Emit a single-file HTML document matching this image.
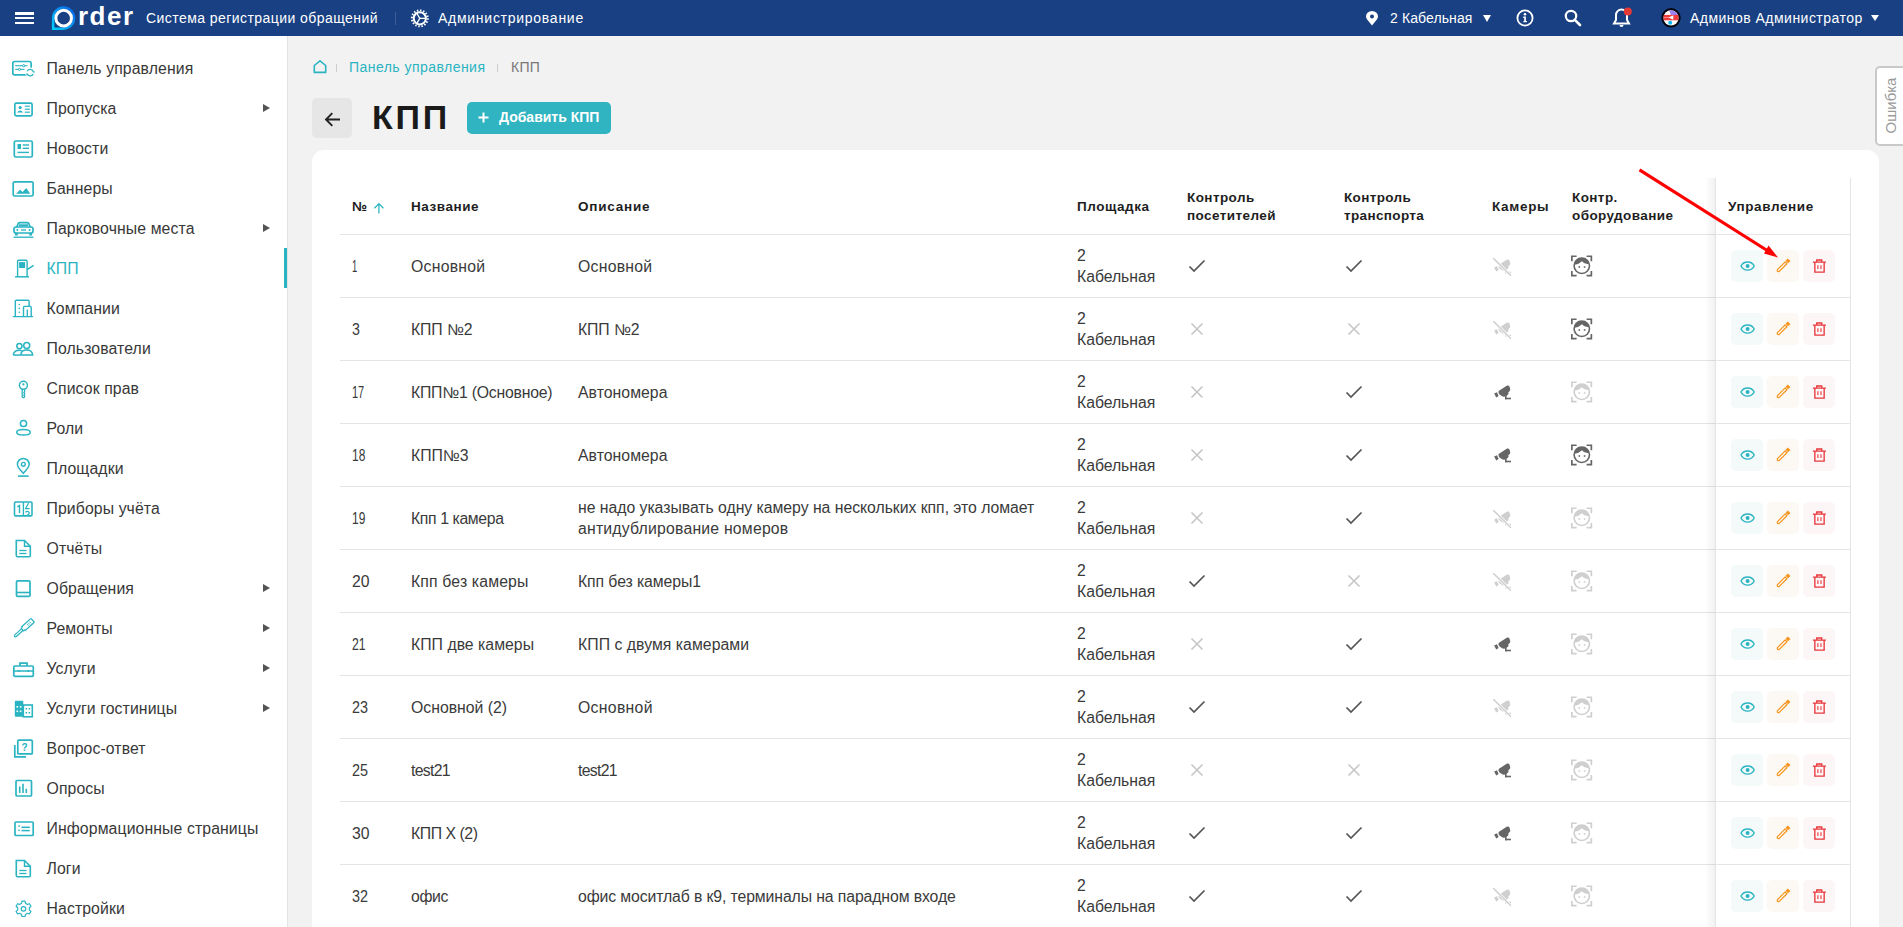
<!DOCTYPE html><html><head><meta charset="utf-8"><style>
*{box-sizing:border-box;margin:0;padding:0}
html,body{width:1903px;height:927px;overflow:hidden;background:#f2f2f2;font-family:"Liberation Sans", sans-serif;}
.a{position:absolute;white-space:nowrap}
#hdr{position:absolute;left:0;top:0;width:1903px;height:36px;background:#184082;}
.ht{position:absolute;color:#fff;font-size:14px;line-height:16px;white-space:nowrap}
#side{position:absolute;left:0;top:36px;width:288px;height:891px;background:#fff;border-right:1px solid #e3e3e3}
.si{position:absolute;left:46.5px;font-size:15.8px;letter-spacing:0.1px;color:#333;line-height:18px;white-space:nowrap}
.sic{position:absolute;left:11px;width:24px;height:24px}
.sar{position:absolute;left:263px;width:0;height:0;border-top:4.5px solid transparent;border-bottom:4.5px solid transparent;border-left:7px solid #555}
.th{position:absolute;font-size:13.5px;font-weight:700;color:#1e1e1e;line-height:18px;white-space:nowrap}
.td{position:absolute;font-size:15.8px;color:#3a3a3a;line-height:21px;white-space:nowrap;letter-spacing:0.12px}
.rl{position:absolute;left:340px;width:1510px;height:1px;background:#e4e4e4}
.btn{position:absolute;width:32px;height:32px;border-radius:5px}
</style></head><body><div id="hdr">
<div class="a" style="left:15px;top:12px;width:19px;height:2.5px;background:#fff"></div>
<div class="a" style="left:15px;top:16.75px;width:19px;height:2.5px;background:#fff"></div>
<div class="a" style="left:15px;top:21.5px;width:19px;height:2.5px;background:#fff"></div>
<svg class="a" style="left:45px;top:2px" width="32" height="32" viewBox="0 0 32 32">
<defs><linearGradient id="lg" x1="0" y1="1" x2="1" y2="0"><stop offset="0" stop-color="#00d4ff"/><stop offset="1" stop-color="#0a5ae6"/></linearGradient></defs>
<path d="M6.9 16 A11.75 11.75 0 1 1 18.65 27.75 L18.65 28 H6.9 Z" fill="url(#lg)"/>
<path d="M9.4 16.1 A9.25 9.25 0 1 1 18.65 25.35 L18.65 25.5 H9.4 Z" fill="#184082"/>
<circle cx="18.65" cy="16.15" r="7.8" fill="none" stroke="#fff" stroke-width="3"/>
</svg>
<div class="ht" style="left:78px;top:1px;font-size:26px;line-height:30px;letter-spacing:1.5px;font-weight:700">rder</div>
<div class="ht" style="left:146px;top:10px;letter-spacing:0.44px">Система регистрации обращений</div>
<div class="a" style="left:395px;top:12px;width:1px;height:13px;background:#3d5d95"></div>
<svg class="a" style="left:410px;top:9px" width="20" height="20" viewBox="0 0 20 20">
<circle cx="9.8" cy="9.35" r="8" fill="none" stroke="#fff" stroke-width="1.9" stroke-dasharray="1.45 1.69"/>
<circle cx="9.8" cy="9.35" r="6.1" fill="none" stroke="#fff" stroke-width="2"/>
<g stroke="#fff" stroke-width="1.3"><line x1="9.8" y1="9.35" x2="16" y2="9.35"/><line x1="9.8" y1="9.35" x2="6.7" y2="4"/><line x1="9.8" y1="9.35" x2="6.7" y2="14.7"/></g>
</svg>
<div class="ht" style="left:438px;top:10px;letter-spacing:0.73px">Администрирование</div>
<svg class="a" style="left:1365px;top:11px" width="14" height="15" viewBox="0 0 14 15">
<path d="M7 14.5 C3 9.5 1 7.5 1 5.5 A6 5.5 0 0 1 13 5.5 C13 7.5 11 9.5 7 14.5 Z" fill="#fff"/>
<circle cx="7" cy="5.5" r="2" fill="#184082"/>
</svg>
<div class="ht" style="left:1390px;top:10px;letter-spacing:0.1px">2 Кабельная</div>
<div class="a" style="left:1483px;top:15px;width:0;height:0;border-left:4.5px solid transparent;border-right:4.5px solid transparent;border-top:7px solid #fff"></div>
<svg class="a" style="left:1516px;top:9px" width="18" height="18" viewBox="0 0 18 18">
<circle cx="9" cy="9" r="7.6" fill="none" stroke="#fff" stroke-width="1.8"/>
<circle cx="9" cy="5.3" r="1.3" fill="#fff"/>
<path d="M7.3 7.6 H9.9 V12 H10.9 V13.3 H7.3 V12 H8.2 V8.9 H7.3 Z" fill="#fff"/>
</svg>
<svg class="a" style="left:1564px;top:9px" width="18" height="18" viewBox="0 0 18 18">
<circle cx="7" cy="7" r="5.2" fill="none" stroke="#fff" stroke-width="2.2"/>
<line x1="10.8" y1="10.8" x2="16" y2="16" stroke="#fff" stroke-width="2.6" stroke-linecap="round"/>
</svg>
<svg class="a" style="left:1612px;top:6px" width="22" height="22" viewBox="0 0 22 22">
<path d="M9.5 3.5 A5.5 5.5 0 0 1 15 9 V14 L17 17.5 H2 L4 14 V9 A5.5 5.5 0 0 1 9.5 3.5 Z" fill="none" stroke="#fff" stroke-width="2"/>
<path d="M7.5 19 A2 2 0 0 0 11.5 19 Z" fill="#fff"/>
<circle cx="15.8" cy="5.4" r="4" fill="#e53935"/>
</svg>
<svg class="a" style="left:1660px;top:7px" width="22" height="22" viewBox="0 0 22 22">
<circle cx="11" cy="10.8" r="9.7" fill="#050510"/>
<clipPath id="avc"><circle cx="11" cy="10.8" r="7.6"/></clipPath>
<g clip-path="url(#avc)">
<rect x="0" y="0" width="22" height="22" fill="#fff"/>
<path d="M9 3 Q15 2.5 18.5 8.5 L18.5 8.2 H11 Z" fill="#9c7ff0"/>
<rect x="2" y="7.9" width="18" height="5.4" fill="#f03c3c"/>
<path d="M8.5 10.5 L13.3 8.3 V12.7 Z" fill="#fff"/>
<line x1="4" y1="10.5" x2="9" y2="10.5" stroke="#ffb0b0" stroke-width="0.6"/>
<circle cx="10.2" cy="15.8" r="2" fill="#10b8f0"/>
</g>
</svg>
<div class="ht" style="left:1690px;top:10px;letter-spacing:0.47px">Админов Администратор</div>
<div class="a" style="left:1871px;top:15px;width:0;height:0;border-left:4px solid transparent;border-right:4px solid transparent;border-top:6px solid #fff"></div>
</div>
<div id="side">
<svg class="sic" style="top:20px" viewBox="0 0 24 24" width="24" height="24"><rect x="1.8" y="5.5" width="18.3" height="13.4" rx="1.8" fill="none" stroke="#2ab4c2" stroke-width="1.7"/><line x1="4.2" y1="9.7" x2="16.5" y2="9.7" stroke="#2ab4c2" stroke-width="1.1"/><circle cx="12.7" cy="9.7" r="1.1" fill="#fff" stroke="#2ab4c2" stroke-width="1"/><line x1="4.2" y1="13.4" x2="13.5" y2="13.4" stroke="#2ab4c2" stroke-width="1.1"/><circle cx="8.4" cy="13.4" r="1.1" fill="#fff" stroke="#2ab4c2" stroke-width="1"/><circle cx="19.2" cy="16.6" r="5" fill="#fff"/><path d="M16.2 15.2 A3.3 3.3 0 0 1 22.3 15.6 M22.2 18 A3.3 3.3 0 0 1 16.1 17.6" fill="none" stroke="#2ab4c2" stroke-width="1.3"/><path d="M21.3 15.6 L23.6 15.1 L23.2 17.3 Z M15 17.6 L17.2 17.9 L16.1 19.8 Z" fill="#2ab4c2"/></svg>
<div class="si" style="top:23.7px;color:#383838">Панель управления</div>
<svg class="sic" style="top:60px" viewBox="0 0 24 24" width="24" height="24"><rect x="3.8" y="7.2" width="17.3" height="12.6" rx="1.5" fill="none" stroke="#2ab4c2" stroke-width="1.7"/><circle cx="9.2" cy="11.6" r="1.6" fill="#2ab4c2"/><path d="M6.1 16.6 Q9.2 12.2 12.3 16.6 Z" fill="#2ab4c2"/><line x1="13.8" y1="10.2" x2="18.8" y2="10.2" stroke="#2ab4c2" stroke-width="1.2"/><line x1="13.8" y1="13.2" x2="18.8" y2="13.2" stroke="#2ab4c2" stroke-width="1.2"/><line x1="13.8" y1="16.2" x2="18.8" y2="16.2" stroke="#2ab4c2" stroke-width="1.2"/></svg>
<div class="si" style="top:63.7px;color:#383838">Пропуска</div>
<div class="sar" style="top:67.5px"></div>
<svg class="sic" style="top:100px" viewBox="0 0 24 24" width="24" height="24"><rect x="3.3" y="5" width="18" height="16" rx="1.5" fill="none" stroke="#2ab4c2" stroke-width="1.7"/><rect x="6.5" y="8" width="3.5" height="5" fill="#2ab4c2"/><line x1="11.8" y1="9" x2="18" y2="9" stroke="#2ab4c2" stroke-width="1.4"/><line x1="11.8" y1="12.3" x2="18" y2="12.3" stroke="#2ab4c2" stroke-width="1.4"/><line x1="6.5" y1="16.4" x2="18" y2="16.4" stroke="#2ab4c2" stroke-width="1.4"/></svg>
<div class="si" style="top:103.7px;color:#383838">Новости</div>
<svg class="sic" style="top:140px" viewBox="0 0 24 24" width="24" height="24"><rect x="2.2" y="5.8" width="19.9" height="14.2" rx="1.5" fill="none" stroke="#2ab4c2" stroke-width="1.7"/><path d="M5 17.8 L9 13.8 L11.6 16 L15.2 12 L19.3 17.8 Z" fill="#2ab4c2"/></svg>
<div class="si" style="top:143.7px;color:#383838">Баннеры</div>
<svg class="sic" style="top:180px" viewBox="0 0 24 24" width="24" height="24"><path d="M5.5 11.5 L7.3 7.5 Q7.8 6.6 8.9 6.6 H16.1 Q17.2 6.6 17.7 7.5 L19.5 11.5" fill="none" stroke="#2ab4c2" stroke-width="1.7"/><rect x="3" y="11" width="19" height="6" rx="2" fill="none" stroke="#2ab4c2" stroke-width="1.7"/><rect x="8" y="8.3" width="9" height="2" fill="#2ab4c2"/><circle cx="6.3" cy="14" r="1" fill="#2ab4c2"/><circle cx="18.7" cy="14" r="1" fill="#2ab4c2"/><line x1="10" y1="14" x2="15" y2="14" stroke="#2ab4c2" stroke-width="1.3"/><rect x="4" y="17" width="2.8" height="2.5" fill="#2ab4c2"/><rect x="18.2" y="17" width="2.8" height="2.5" fill="#2ab4c2"/><line x1="2.5" y1="21.2" x2="22.5" y2="21.2" stroke="#2ab4c2" stroke-width="1.3"/></svg>
<div class="si" style="top:183.7px;color:#383838">Парковочные места</div>
<div class="sar" style="top:187.5px"></div>
<svg class="sic" style="top:220px" viewBox="0 0 24 24" width="24" height="24"><path d="M6.6 20.6 V5.2 Q6.6 4.2 7.6 4.2 H15.1 Q16.1 4.2 16.1 5.2 V20.6" fill="none" stroke="#2ab4c2" stroke-width="1.4"/><rect x="8.1" y="6.1" width="6" height="5.9" fill="#2ab4c2"/><line x1="16.1" y1="13.6" x2="22.6" y2="9.3" stroke="#2ab4c2" stroke-width="1.4"/><line x1="4.1" y1="20.8" x2="18" y2="20.8" stroke="#2ab4c2" stroke-width="1.5"/></svg>
<div class="si" style="top:223.7px;color:#2ab4c2">КПП</div>
<svg class="sic" style="top:260px" viewBox="0 0 24 24" width="24" height="24"><path d="M4.3 20.5 V5.3 Q4.3 4.3 5.3 4.3 H17.1 Q18.1 4.3 18.1 5.3 V10.4" fill="none" stroke="#2ab4c2" stroke-width="1.4"/><path d="M12.5 20.5 V11.4 Q12.5 10.4 13.5 10.4 H19.2 Q20.2 10.4 20.2 11.4 V20.5" fill="none" stroke="#2ab4c2" stroke-width="1.4"/><line x1="16.3" y1="13.5" x2="16.3" y2="20.5" stroke="#2ab4c2" stroke-width="1.3"/><circle cx="8.3" cy="8.5" r="0.8" fill="#2ab4c2"/><circle cx="8.3" cy="12.4" r="0.8" fill="#2ab4c2"/><circle cx="8.3" cy="16.3" r="0.8" fill="#2ab4c2"/><line x1="2.4" y1="20.6" x2="21.5" y2="20.6" stroke="#2ab4c2" stroke-width="1.4" stroke-linecap="round"/></svg>
<div class="si" style="top:263.7px;color:#383838">Компании</div>
<svg class="sic" style="top:300px" viewBox="0 0 24 24" width="24" height="24"><g transform="translate(0,1.5)"><circle cx="8.4" cy="8.6" r="2.6" fill="none" stroke="#2ab4c2" stroke-width="1.5"/><circle cx="15.7" cy="8" r="3" fill="none" stroke="#2ab4c2" stroke-width="1.5"/><path d="M2.3 17.5 Q3 12.8 8.4 12.8 Q10 12.8 11 13.5" fill="none" stroke="#2ab4c2" stroke-width="1.5"/><path d="M9.7 17.6 Q10.2 12.6 15.7 12.6 Q21.2 12.6 21.7 17.6 Z" fill="none" stroke="#2ab4c2" stroke-width="1.5"/><line x1="2.3" y1="17.6" x2="9" y2="17.6" stroke="#2ab4c2" stroke-width="1.5"/></g></svg>
<div class="si" style="top:303.7px;color:#383838">Пользователи</div>
<svg class="sic" style="top:340px" viewBox="0 0 24 24" width="24" height="24"><circle cx="12.4" cy="9.3" r="4" fill="none" stroke="#2ab4c2" stroke-width="1.5"/><circle cx="12.4" cy="8.4" r="1.1" fill="#2ab4c2"/><path d="M11.2 13.2 V20.8 Q11.2 21.6 12 21.6 H12.8 Q13.6 21.6 13.6 20.8 V19.8 L12.9 19.1 L13.6 18.2 V17.3 L12.9 16.6 L13.6 15.8 V13.2" fill="none" stroke="#2ab4c2" stroke-width="1.3"/></svg>
<div class="si" style="top:343.7px;color:#383838">Список прав</div>
<svg class="sic" style="top:380px" viewBox="0 0 24 24" width="24" height="24"><circle cx="12.5" cy="7.5" r="3.1" fill="none" stroke="#2ab4c2" stroke-width="1.5"/><ellipse cx="12.5" cy="16.3" rx="6.8" ry="2.8" fill="none" stroke="#2ab4c2" stroke-width="1.5"/></svg>
<div class="si" style="top:383.7px;color:#383838">Роли</div>
<svg class="sic" style="top:420px" viewBox="0 0 24 24" width="24" height="24"><path d="M12.3 17.3 C8.6 13.5 6.4 11 6.4 8.3 A5.9 5.9 0 0 1 18.2 8.3 C18.2 11 16 13.5 12.3 17.3 Z" fill="none" stroke="#2ab4c2" stroke-width="1.5"/><circle cx="12.3" cy="8.3" r="1.9" fill="none" stroke="#2ab4c2" stroke-width="1.4"/><line x1="7" y1="20.1" x2="17.6" y2="20.1" stroke="#2ab4c2" stroke-width="1.6"/></svg>
<div class="si" style="top:423.7px;color:#383838">Площадки</div>
<svg class="sic" style="top:460px" viewBox="0 0 24 24" width="24" height="24"><rect x="3.5" y="6" width="17.5" height="13.9" rx="1.2" fill="none" stroke="#2ab4c2" stroke-width="1.6"/><line x1="12.4" y1="6" x2="12.4" y2="19.9" stroke="#2ab4c2" stroke-width="1.3"/><path d="M6.3 10.8 L8.5 9.5 V17" fill="none" stroke="#2ab4c2" stroke-width="1.4"/><path d="M17.6 7 L14.6 12.6 H18.6" fill="none" stroke="#2ab4c2" stroke-width="1.2"/><path d="M14.4 16.2 Q16.4 14.6 18.2 16.4 Q18.6 18.3 16.3 19" fill="none" stroke="#2ab4c2" stroke-width="1.2"/></svg>
<div class="si" style="top:463.7px;color:#383838">Приборы учёта</div>
<svg class="sic" style="top:500px" viewBox="0 0 24 24" width="24" height="24"><path d="M5.3 4.5 H13.5 L19.3 10.3 V19.5 Q19.3 20.8 18 20.8 H6.6 Q5.3 20.8 5.3 19.5 Z" fill="none" stroke="#2ab4c2" stroke-width="1.6"/><path d="M13.5 4.5 V10.3 H19.3" fill="none" stroke="#2ab4c2" stroke-width="1.4"/><line x1="8.3" y1="14.5" x2="15.5" y2="14.5" stroke="#2ab4c2" stroke-width="1.3"/><line x1="8.3" y1="17.5" x2="15.5" y2="17.5" stroke="#2ab4c2" stroke-width="1.3"/></svg>
<div class="si" style="top:503.7px;color:#383838">Отчёты</div>
<svg class="sic" style="top:540px" viewBox="0 0 24 24" width="24" height="24"><rect x="5.5" y="4.8" width="13.5" height="15.6" rx="1.2" fill="none" stroke="#2ab4c2" stroke-width="1.7"/><line x1="5.5" y1="16.5" x2="19" y2="16.5" stroke="#2ab4c2" stroke-width="1.6"/></svg>
<div class="si" style="top:543.7px;color:#383838">Обращения</div>
<div class="sar" style="top:547.5px"></div>
<svg class="sic" style="top:580px" viewBox="0 0 24 24" width="24" height="24"><g transform="translate(12.6,12.45) rotate(-42)" fill="none" stroke="#2ab4c2"><rect x="-12" y="-1.1" width="10.8" height="2.2" rx="1.1" stroke-width="1.2"/><path d="M-1.6 -1.9 H0 V-2.6 H11.4 Q12.2 -2.6 12.2 -1.8 V1.8 Q12.2 2.6 11.4 2.6 H0 V1.9 H-1.6 Z" stroke-width="1.3" fill="#fff"/><path d="M5.5 -1.3 V1.3 M7.2 -1.3 V1.3 M8.9 -1.3 V1.3" stroke-width="0.8"/></g></svg>
<div class="si" style="top:583.7px;color:#383838">Ремонты</div>
<div class="sar" style="top:587.5px"></div>
<svg class="sic" style="top:620px" viewBox="0 0 24 24" width="24" height="24"><rect x="2.8" y="10" width="19.5" height="10.3" rx="1" fill="none" stroke="#2ab4c2" stroke-width="1.7"/><path d="M9 10 V7.2 H16 V10" fill="none" stroke="#2ab4c2" stroke-width="1.7"/><line x1="2.8" y1="15" x2="22.3" y2="15" stroke="#2ab4c2" stroke-width="1.5"/><circle cx="7.8" cy="15" r="1" fill="#2ab4c2"/><circle cx="17.3" cy="15" r="1" fill="#2ab4c2"/></svg>
<div class="si" style="top:623.7px;color:#383838">Услуги</div>
<div class="sar" style="top:627.5px"></div>
<svg class="sic" style="top:660px" viewBox="0 0 24 24" width="24" height="24"><rect x="3.8" y="4.8" width="8.5" height="16" rx="1" fill="#2ab4c2"/><rect x="12.3" y="9" width="9" height="11.8" fill="none" stroke="#2ab4c2" stroke-width="1.6"/><rect x="5.5" y="10" width="1.6" height="1.6" fill="#fff"/><rect x="8.8" y="10" width="1.6" height="1.6" fill="#fff"/><rect x="5.5" y="14.5" width="1.6" height="1.6" fill="#fff"/><rect x="8.8" y="14.5" width="1.6" height="1.6" fill="#fff"/><rect x="14.6" y="12" width="1.5" height="1.5" fill="#2ab4c2"/><rect x="17.6" y="12" width="1.5" height="1.5" fill="#2ab4c2"/><rect x="14.6" y="16" width="1.5" height="1.5" fill="#2ab4c2"/><rect x="17.6" y="16" width="1.5" height="1.5" fill="#2ab4c2"/></svg>
<div class="si" style="top:663.7px;color:#383838">Услуги гостиницы</div>
<div class="sar" style="top:667.5px"></div>
<svg class="sic" style="top:700px" viewBox="0 0 24 24" width="24" height="24"><path d="M3.8 9 V20.8 H15" fill="none" stroke="#2ab4c2" stroke-width="1.7"/><rect x="6.8" y="4.2" width="14.5" height="13.7" rx="1" fill="none" stroke="#2ab4c2" stroke-width="1.7"/><text x="10.6" y="15" font-family="Liberation Sans" font-size="10" font-weight="700" fill="#2ab4c2">?</text></svg>
<div class="si" style="top:703.7px;color:#383838">Вопрос-ответ</div>
<svg class="sic" style="top:740px" viewBox="0 0 24 24" width="24" height="24"><rect x="5" y="4.5" width="15.5" height="15.5" rx="1" fill="none" stroke="#2ab4c2" stroke-width="1.7"/><line x1="8.7" y1="10.5" x2="8.7" y2="17" stroke="#2ab4c2" stroke-width="1.6"/><line x1="12" y1="7.8" x2="12" y2="17" stroke="#2ab4c2" stroke-width="1.6"/><line x1="15.3" y1="12.8" x2="15.3" y2="17" stroke="#2ab4c2" stroke-width="1.6"/></svg>
<div class="si" style="top:743.7px;color:#383838">Опросы</div>
<svg class="sic" style="top:780px" viewBox="0 0 24 24" width="24" height="24"><rect x="4" y="6" width="18.2" height="13.5" rx="1" fill="none" stroke="#2ab4c2" stroke-width="1.7"/><rect x="7.3" y="9.3" width="1.5" height="1.5" fill="#2ab4c2"/><rect x="7.3" y="13.6" width="1.5" height="1.5" fill="#2ab4c2"/><line x1="10.5" y1="11.3" x2="18.8" y2="11.3" stroke="#2ab4c2" stroke-width="1.5"/><line x1="10.5" y1="14.6" x2="18.8" y2="14.6" stroke="#2ab4c2" stroke-width="1.5"/></svg>
<div class="si" style="top:783.7px;color:#383838">Информационные страницы</div>
<svg class="sic" style="top:820px" viewBox="0 0 24 24" width="24" height="24"><path d="M5.3 4.5 H13.5 L19.3 10.3 V19.5 Q19.3 20.8 18 20.8 H6.6 Q5.3 20.8 5.3 19.5 Z" fill="none" stroke="#2ab4c2" stroke-width="1.6"/><path d="M13.5 4.5 V10.3 H19.3" fill="none" stroke="#2ab4c2" stroke-width="1.4"/><line x1="8.3" y1="14.5" x2="15.5" y2="14.5" stroke="#2ab4c2" stroke-width="1.3"/><line x1="8.3" y1="17.5" x2="15.5" y2="17.5" stroke="#2ab4c2" stroke-width="1.3"/></svg>
<div class="si" style="top:823.7px;color:#383838">Логи</div>
<svg class="sic" style="top:860px" viewBox="0 0 24 24" width="24" height="24"><path d="M11 5.2 H14 L14.5 7.3 L16.4 8.4 L18.4 7.7 L19.9 10.3 L18.3 11.8 V13.9 L19.9 15.4 L18.4 18 L16.4 17.3 L14.5 18.4 L14 20.5 H11 L10.5 18.4 L8.6 17.3 L6.6 18 L5.1 15.4 L6.7 13.9 V11.8 L5.1 10.3 L6.6 7.7 L8.6 8.4 L10.5 7.3 Z" fill="none" stroke="#2ab4c2" stroke-width="1.2" stroke-linejoin="round"/><circle cx="12.5" cy="12.85" r="2.3" fill="none" stroke="#2ab4c2" stroke-width="1.2"/></svg>
<div class="si" style="top:863.7px;color:#383838">Настройки</div>
<div class="a" style="left:284px;top:212px;width:3px;height:40px;background:#2ab4c2"></div>
</div>
<svg class="a" style="left:312px;top:59px" width="16" height="16" viewBox="0 0 16 16">
<path d="M2.3 13.4 V6.5 L8 1.8 L13.7 6.5 V13.4 Z" fill="none" stroke="#2ab4c2" stroke-width="1.6" stroke-linejoin="round"/>
</svg>
<div class="a" style="left:336px;top:64px;width:1px;height:8px;background:#ccc"></div>
<div class="a" style="left:349px;top:59px;font-size:14px;line-height:16px;color:#2ab4c2;letter-spacing:0.46px">Панель управления</div>
<div class="a" style="left:497px;top:64px;width:1px;height:8px;background:#ccc"></div>
<div class="a" style="left:511px;top:59px;font-size:14px;line-height:16px;color:#777;letter-spacing:0.3px">КПП</div>
<div class="a" style="left:312px;top:98px;width:40px;height:40px;border-radius:5px;background:#e6e6e6"></div>
<svg class="a" style="left:324px;top:111px" width="17" height="17" viewBox="0 0 17 17">
<path d="M16 8.5 H2 M8.3 2.2 L2 8.5 L8.3 14.8" fill="none" stroke="#222" stroke-width="1.9"/>
</svg>
<div class="a" style="left:372px;top:97px;font-size:34px;line-height:40px;font-weight:700;color:#1a1a1a;letter-spacing:2.8px">КПП</div>
<div class="a" style="left:467px;top:102px;width:144px;height:32px;border-radius:5px;background:#30b4c1"></div>
<svg class="a" style="left:478px;top:112px" width="11" height="11" viewBox="0 0 11 11">
<path d="M5.5 0.5 V10.5 M0.5 5.5 H10.5" stroke="#fff" stroke-width="2"/>
</svg>
<div class="a" style="left:499px;top:109px;font-size:14px;line-height:16px;font-weight:700;color:#fff">Добавить КПП</div>
<div class="a" style="left:1875px;top:66px;width:40px;height:80px;border:2px solid #c9c9c9;border-radius:5px;background:#fff"></div>
<div class="a" style="left:1862px;top:97px;width:57px;height:17px;transform:rotate(-90deg);font-size:15px;line-height:17px;color:#9a9a9a;text-align:center">Ошибка</div>
<div class="a" style="left:312px;top:150px;width:1567px;height:800px;border-radius:12px;background:#fff"></div>
<div class="th" style="left:352px;top:197.5px;letter-spacing:0.400px">№</div>
<svg class="a" style="left:373px;top:202px" width="12" height="12" viewBox="0 0 12 12">
<path d="M5.9 11.5 V1.6 M1.4 6.2 L5.9 1.6 L10.4 6.2" fill="none" stroke="#2ab4c2" stroke-width="1.25"/>
</svg>
<div class="th" style="left:411px;top:197.5px;letter-spacing:0.557px">Название</div>
<div class="th" style="left:578px;top:197.5px;letter-spacing:0.771px">Описание</div>
<div class="th" style="left:1077px;top:197.5px;letter-spacing:0.529px">Площадка</div>
<div class="th" style="left:1187px;top:189px;letter-spacing:0.420px">Контроль<br>посетителей</div>
<div class="th" style="left:1344px;top:189px;letter-spacing:0.356px">Контроль<br>транспорта</div>
<div class="th" style="left:1492px;top:197.5px;letter-spacing:0.680px">Камеры</div>
<div class="th" style="left:1572px;top:189px;letter-spacing:0.409px">Контр.<br>оборудование</div>
<div class="rl" style="top:234px"></div>
<div class="td" id="n0" style="left:352px;top:256px;letter-spacing:0;transform:scaleX(0.597);transform-origin:0 0">1</div>
<div class="td" id="m0" style="left:411px;top:256px;letter-spacing:0.243px">Основной</div>
<div class="td" id="d0" style="left:578px;top:256px;letter-spacing:0.243px">Основной</div>
<div class="td" id="k0" style="left:1077px;top:245px;letter-spacing:-0.05px">2<br>Кабельная</div>
<svg class="a" style="left:1188px;top:256.5px" width="18" height="18" viewBox="0 0 18 18"><path d="M1.5 9.5 L6 14 L16.5 3.5" fill="none" stroke="#555" stroke-width="1.7"/></svg>
<svg class="a" style="left:1345px;top:256.5px" width="18" height="18" viewBox="0 0 18 18"><path d="M1.5 9.5 L6 14 L16.5 3.5" fill="none" stroke="#555" stroke-width="1.7"/></svg>
<svg class="a" style="left:1493px;top:257.5px" width="19" height="19" viewBox="0 0 19 19"><path d="M5.6 6.9 L14.1 1.6 Q15.6 0.9 16.5 2.6 L17.2 5.1 Q17.5 6.3 16.5 7.3 L15.3 8.2 Q15.9 9.5 15.2 10.5 L12.8 12.3 Q10.5 13.4 8.4 11.7 L6.3 10.2 Q5.1 8.8 5.6 6.9 Z" fill="#cfcfcf"/><rect x="12" y="10.5" width="1.6" height="4.8" fill="#cfcfcf"/><rect x="12" y="13.7" width="6" height="1.6" fill="#cfcfcf"/><path d="M1.1 9.5 L4 8.2 L5.6 12 L3.3 13.6 Z" fill="#cfcfcf"/><line x1="0.2" y1="0.1" x2="17.9" y2="17.7" stroke="#fff" stroke-width="3"/><line x1="0.2" y1="0.1" x2="17.9" y2="17.7" stroke="#cfcfcf" stroke-width="1.5"/></svg>
<svg class="a" style="left:1570px;top:254.5px" width="24" height="24" viewBox="0 0 24 24">
<path d="M1.85 6.3 V1.25 H6.6 M16.6 1.25 H21.35 V6.3 M21.35 16.1 V20.65 H16.6 M6.6 20.65 H1.85 V16.1" fill="none" stroke="#666" stroke-width="1.7"/>
<circle cx="11.8" cy="10.8" r="7.7" fill="none" stroke="#666" stroke-width="1.6"/>
<path d="M4.3 9.8 A7.7 7.7 0 0 1 19.3 8.8 Q14.5 9.8 12 6.3 Q9 9.3 4.3 9.8 Z" fill="#666"/>
<rect x="8.5" y="11.2" width="1.6" height="1.6" fill="#666"/><rect x="13.8" y="11.2" width="1.6" height="1.6" fill="#666"/>
</svg>
<div class="rl" style="top:297px"></div>
<div class="td" id="n1" style="left:352px;top:319px;letter-spacing:0;transform:scaleX(0.898);transform-origin:0 0">3</div>
<div class="td" id="m1" style="left:411px;top:319px;letter-spacing:-0.100px">КПП №2</div>
<div class="td" id="d1" style="left:578px;top:319px;letter-spacing:-0.100px">КПП №2</div>
<div class="td" id="k1" style="left:1077px;top:308px;letter-spacing:-0.05px">2<br>Кабельная</div>
<svg class="a" style="left:1188px;top:319.5px" width="18" height="18" viewBox="0 0 18 18"><path d="M3.5 3.5 L14.5 14.5 M14.5 3.5 L3.5 14.5" fill="none" stroke="#c6c6c6" stroke-width="1.6"/></svg>
<svg class="a" style="left:1345px;top:319.5px" width="18" height="18" viewBox="0 0 18 18"><path d="M3.5 3.5 L14.5 14.5 M14.5 3.5 L3.5 14.5" fill="none" stroke="#c6c6c6" stroke-width="1.6"/></svg>
<svg class="a" style="left:1493px;top:320.5px" width="19" height="19" viewBox="0 0 19 19"><path d="M5.6 6.9 L14.1 1.6 Q15.6 0.9 16.5 2.6 L17.2 5.1 Q17.5 6.3 16.5 7.3 L15.3 8.2 Q15.9 9.5 15.2 10.5 L12.8 12.3 Q10.5 13.4 8.4 11.7 L6.3 10.2 Q5.1 8.8 5.6 6.9 Z" fill="#cfcfcf"/><rect x="12" y="10.5" width="1.6" height="4.8" fill="#cfcfcf"/><rect x="12" y="13.7" width="6" height="1.6" fill="#cfcfcf"/><path d="M1.1 9.5 L4 8.2 L5.6 12 L3.3 13.6 Z" fill="#cfcfcf"/><line x1="0.2" y1="0.1" x2="17.9" y2="17.7" stroke="#fff" stroke-width="3"/><line x1="0.2" y1="0.1" x2="17.9" y2="17.7" stroke="#cfcfcf" stroke-width="1.5"/></svg>
<svg class="a" style="left:1570px;top:317.5px" width="24" height="24" viewBox="0 0 24 24">
<path d="M1.85 6.3 V1.25 H6.6 M16.6 1.25 H21.35 V6.3 M21.35 16.1 V20.65 H16.6 M6.6 20.65 H1.85 V16.1" fill="none" stroke="#666" stroke-width="1.7"/>
<circle cx="11.8" cy="10.8" r="7.7" fill="none" stroke="#666" stroke-width="1.6"/>
<path d="M4.3 9.8 A7.7 7.7 0 0 1 19.3 8.8 Q14.5 9.8 12 6.3 Q9 9.3 4.3 9.8 Z" fill="#666"/>
<rect x="8.5" y="11.2" width="1.6" height="1.6" fill="#666"/><rect x="13.8" y="11.2" width="1.6" height="1.6" fill="#666"/>
</svg>
<div class="rl" style="top:360px"></div>
<div class="td" id="n2" style="left:352px;top:382px;letter-spacing:0;transform:scaleX(0.697);transform-origin:0 0">17</div>
<div class="td" id="m2" style="left:411px;top:382px;letter-spacing:-0.220px">КПП№1 (Основное)</div>
<div class="td" id="d2" style="left:578px;top:382px;letter-spacing:0.033px">Автономера</div>
<div class="td" id="k2" style="left:1077px;top:371px;letter-spacing:-0.05px">2<br>Кабельная</div>
<svg class="a" style="left:1188px;top:382.5px" width="18" height="18" viewBox="0 0 18 18"><path d="M3.5 3.5 L14.5 14.5 M14.5 3.5 L3.5 14.5" fill="none" stroke="#c6c6c6" stroke-width="1.6"/></svg>
<svg class="a" style="left:1345px;top:382.5px" width="18" height="18" viewBox="0 0 18 18"><path d="M1.5 9.5 L6 14 L16.5 3.5" fill="none" stroke="#555" stroke-width="1.7"/></svg>
<svg class="a" style="left:1493px;top:383.5px" width="19" height="19" viewBox="0 0 19 19"><path d="M5.6 6.9 L14.1 1.6 Q15.6 0.9 16.5 2.6 L17.2 5.1 Q17.5 6.3 16.5 7.3 L15.3 8.2 Q15.9 9.5 15.2 10.5 L12.8 12.3 Q10.5 13.4 8.4 11.7 L6.3 10.2 Q5.1 8.8 5.6 6.9 Z" fill="#666"/><rect x="12" y="10.5" width="1.6" height="4.8" fill="#666"/><rect x="12" y="13.7" width="6" height="1.6" fill="#666"/><path d="M1.1 9.5 L4 8.2 L5.6 12 L3.3 13.6 Z" fill="#666"/></svg>
<svg class="a" style="left:1570px;top:380.5px" width="24" height="24" viewBox="0 0 24 24">
<path d="M1.85 6.3 V1.25 H6.6 M16.6 1.25 H21.35 V6.3 M21.35 16.1 V20.65 H16.6 M6.6 20.65 H1.85 V16.1" fill="none" stroke="#cfcfcf" stroke-width="1.7"/>
<circle cx="11.8" cy="10.8" r="7.7" fill="none" stroke="#cfcfcf" stroke-width="1.6"/>
<path d="M4.3 9.8 A7.7 7.7 0 0 1 19.3 8.8 Q14.5 9.8 12 6.3 Q9 9.3 4.3 9.8 Z" fill="#cfcfcf"/>
<rect x="8.5" y="11.2" width="1.6" height="1.6" fill="#cfcfcf"/><rect x="13.8" y="11.2" width="1.6" height="1.6" fill="#cfcfcf"/>
</svg>
<div class="rl" style="top:423px"></div>
<div class="td" id="n3" style="left:352px;top:445px;letter-spacing:0;transform:scaleX(0.758);transform-origin:0 0">18</div>
<div class="td" id="m3" style="left:411px;top:445px;letter-spacing:-0.050px">КПП№3</div>
<div class="td" id="d3" style="left:578px;top:445px;letter-spacing:0.033px">Автономера</div>
<div class="td" id="k3" style="left:1077px;top:434px;letter-spacing:-0.05px">2<br>Кабельная</div>
<svg class="a" style="left:1188px;top:445.5px" width="18" height="18" viewBox="0 0 18 18"><path d="M3.5 3.5 L14.5 14.5 M14.5 3.5 L3.5 14.5" fill="none" stroke="#c6c6c6" stroke-width="1.6"/></svg>
<svg class="a" style="left:1345px;top:445.5px" width="18" height="18" viewBox="0 0 18 18"><path d="M1.5 9.5 L6 14 L16.5 3.5" fill="none" stroke="#555" stroke-width="1.7"/></svg>
<svg class="a" style="left:1493px;top:446.5px" width="19" height="19" viewBox="0 0 19 19"><path d="M5.6 6.9 L14.1 1.6 Q15.6 0.9 16.5 2.6 L17.2 5.1 Q17.5 6.3 16.5 7.3 L15.3 8.2 Q15.9 9.5 15.2 10.5 L12.8 12.3 Q10.5 13.4 8.4 11.7 L6.3 10.2 Q5.1 8.8 5.6 6.9 Z" fill="#666"/><rect x="12" y="10.5" width="1.6" height="4.8" fill="#666"/><rect x="12" y="13.7" width="6" height="1.6" fill="#666"/><path d="M1.1 9.5 L4 8.2 L5.6 12 L3.3 13.6 Z" fill="#666"/></svg>
<svg class="a" style="left:1570px;top:443.5px" width="24" height="24" viewBox="0 0 24 24">
<path d="M1.85 6.3 V1.25 H6.6 M16.6 1.25 H21.35 V6.3 M21.35 16.1 V20.65 H16.6 M6.6 20.65 H1.85 V16.1" fill="none" stroke="#666" stroke-width="1.7"/>
<circle cx="11.8" cy="10.8" r="7.7" fill="none" stroke="#666" stroke-width="1.6"/>
<path d="M4.3 9.8 A7.7 7.7 0 0 1 19.3 8.8 Q14.5 9.8 12 6.3 Q9 9.3 4.3 9.8 Z" fill="#666"/>
<rect x="8.5" y="11.2" width="1.6" height="1.6" fill="#666"/><rect x="13.8" y="11.2" width="1.6" height="1.6" fill="#666"/>
</svg>
<div class="rl" style="top:486px"></div>
<div class="td" id="n4" style="left:352px;top:508px;letter-spacing:0;transform:scaleX(0.758);transform-origin:0 0">19</div>
<div class="td" id="m4" style="left:411px;top:508px;letter-spacing:-0.382px">Кпп 1 камера</div>
<div class="td" id="d4" style="left:578px;top:497px;letter-spacing:-0.034px">не надо указывать одну камеру на нескольких кпп, это ломает</div>
<div class="td" id="e4" style="left:578px;top:518px;letter-spacing:0.200px">антидублирование номеров</div>
<div class="td" id="k4" style="left:1077px;top:497px;letter-spacing:-0.05px">2<br>Кабельная</div>
<svg class="a" style="left:1188px;top:508.5px" width="18" height="18" viewBox="0 0 18 18"><path d="M3.5 3.5 L14.5 14.5 M14.5 3.5 L3.5 14.5" fill="none" stroke="#c6c6c6" stroke-width="1.6"/></svg>
<svg class="a" style="left:1345px;top:508.5px" width="18" height="18" viewBox="0 0 18 18"><path d="M1.5 9.5 L6 14 L16.5 3.5" fill="none" stroke="#555" stroke-width="1.7"/></svg>
<svg class="a" style="left:1493px;top:509.5px" width="19" height="19" viewBox="0 0 19 19"><path d="M5.6 6.9 L14.1 1.6 Q15.6 0.9 16.5 2.6 L17.2 5.1 Q17.5 6.3 16.5 7.3 L15.3 8.2 Q15.9 9.5 15.2 10.5 L12.8 12.3 Q10.5 13.4 8.4 11.7 L6.3 10.2 Q5.1 8.8 5.6 6.9 Z" fill="#cfcfcf"/><rect x="12" y="10.5" width="1.6" height="4.8" fill="#cfcfcf"/><rect x="12" y="13.7" width="6" height="1.6" fill="#cfcfcf"/><path d="M1.1 9.5 L4 8.2 L5.6 12 L3.3 13.6 Z" fill="#cfcfcf"/><line x1="0.2" y1="0.1" x2="17.9" y2="17.7" stroke="#fff" stroke-width="3"/><line x1="0.2" y1="0.1" x2="17.9" y2="17.7" stroke="#cfcfcf" stroke-width="1.5"/></svg>
<svg class="a" style="left:1570px;top:506.5px" width="24" height="24" viewBox="0 0 24 24">
<path d="M1.85 6.3 V1.25 H6.6 M16.6 1.25 H21.35 V6.3 M21.35 16.1 V20.65 H16.6 M6.6 20.65 H1.85 V16.1" fill="none" stroke="#cfcfcf" stroke-width="1.7"/>
<circle cx="11.8" cy="10.8" r="7.7" fill="none" stroke="#cfcfcf" stroke-width="1.6"/>
<path d="M4.3 9.8 A7.7 7.7 0 0 1 19.3 8.8 Q14.5 9.8 12 6.3 Q9 9.3 4.3 9.8 Z" fill="#cfcfcf"/>
<rect x="8.5" y="11.2" width="1.6" height="1.6" fill="#cfcfcf"/><rect x="13.8" y="11.2" width="1.6" height="1.6" fill="#cfcfcf"/>
</svg>
<div class="rl" style="top:549px"></div>
<div class="td" id="n5" style="left:352px;top:571px;letter-spacing:0;transform:scaleX(1.000);transform-origin:0 0">20</div>
<div class="td" id="m5" style="left:411px;top:571px;letter-spacing:0.146px">Кпп без камеры</div>
<div class="td" id="d5" style="left:578px;top:571px;letter-spacing:-0.086px">Кпп без камеры1</div>
<div class="td" id="k5" style="left:1077px;top:560px;letter-spacing:-0.05px">2<br>Кабельная</div>
<svg class="a" style="left:1188px;top:571.5px" width="18" height="18" viewBox="0 0 18 18"><path d="M1.5 9.5 L6 14 L16.5 3.5" fill="none" stroke="#555" stroke-width="1.7"/></svg>
<svg class="a" style="left:1345px;top:571.5px" width="18" height="18" viewBox="0 0 18 18"><path d="M3.5 3.5 L14.5 14.5 M14.5 3.5 L3.5 14.5" fill="none" stroke="#c6c6c6" stroke-width="1.6"/></svg>
<svg class="a" style="left:1493px;top:572.5px" width="19" height="19" viewBox="0 0 19 19"><path d="M5.6 6.9 L14.1 1.6 Q15.6 0.9 16.5 2.6 L17.2 5.1 Q17.5 6.3 16.5 7.3 L15.3 8.2 Q15.9 9.5 15.2 10.5 L12.8 12.3 Q10.5 13.4 8.4 11.7 L6.3 10.2 Q5.1 8.8 5.6 6.9 Z" fill="#cfcfcf"/><rect x="12" y="10.5" width="1.6" height="4.8" fill="#cfcfcf"/><rect x="12" y="13.7" width="6" height="1.6" fill="#cfcfcf"/><path d="M1.1 9.5 L4 8.2 L5.6 12 L3.3 13.6 Z" fill="#cfcfcf"/><line x1="0.2" y1="0.1" x2="17.9" y2="17.7" stroke="#fff" stroke-width="3"/><line x1="0.2" y1="0.1" x2="17.9" y2="17.7" stroke="#cfcfcf" stroke-width="1.5"/></svg>
<svg class="a" style="left:1570px;top:569.5px" width="24" height="24" viewBox="0 0 24 24">
<path d="M1.85 6.3 V1.25 H6.6 M16.6 1.25 H21.35 V6.3 M21.35 16.1 V20.65 H16.6 M6.6 20.65 H1.85 V16.1" fill="none" stroke="#cfcfcf" stroke-width="1.7"/>
<circle cx="11.8" cy="10.8" r="7.7" fill="none" stroke="#cfcfcf" stroke-width="1.6"/>
<path d="M4.3 9.8 A7.7 7.7 0 0 1 19.3 8.8 Q14.5 9.8 12 6.3 Q9 9.3 4.3 9.8 Z" fill="#cfcfcf"/>
<rect x="8.5" y="11.2" width="1.6" height="1.6" fill="#cfcfcf"/><rect x="13.8" y="11.2" width="1.6" height="1.6" fill="#cfcfcf"/>
</svg>
<div class="rl" style="top:612px"></div>
<div class="td" id="n6" style="left:352px;top:634px;letter-spacing:0;transform:scaleX(0.771);transform-origin:0 0">21</div>
<div class="td" id="m6" style="left:411px;top:634px;letter-spacing:0.023px">КПП две камеры</div>
<div class="td" id="d6" style="left:578px;top:634px;letter-spacing:0.037px">КПП с двумя камерами</div>
<div class="td" id="k6" style="left:1077px;top:623px;letter-spacing:-0.05px">2<br>Кабельная</div>
<svg class="a" style="left:1188px;top:634.5px" width="18" height="18" viewBox="0 0 18 18"><path d="M3.5 3.5 L14.5 14.5 M14.5 3.5 L3.5 14.5" fill="none" stroke="#c6c6c6" stroke-width="1.6"/></svg>
<svg class="a" style="left:1345px;top:634.5px" width="18" height="18" viewBox="0 0 18 18"><path d="M1.5 9.5 L6 14 L16.5 3.5" fill="none" stroke="#555" stroke-width="1.7"/></svg>
<svg class="a" style="left:1493px;top:635.5px" width="19" height="19" viewBox="0 0 19 19"><path d="M5.6 6.9 L14.1 1.6 Q15.6 0.9 16.5 2.6 L17.2 5.1 Q17.5 6.3 16.5 7.3 L15.3 8.2 Q15.9 9.5 15.2 10.5 L12.8 12.3 Q10.5 13.4 8.4 11.7 L6.3 10.2 Q5.1 8.8 5.6 6.9 Z" fill="#666"/><rect x="12" y="10.5" width="1.6" height="4.8" fill="#666"/><rect x="12" y="13.7" width="6" height="1.6" fill="#666"/><path d="M1.1 9.5 L4 8.2 L5.6 12 L3.3 13.6 Z" fill="#666"/></svg>
<svg class="a" style="left:1570px;top:632.5px" width="24" height="24" viewBox="0 0 24 24">
<path d="M1.85 6.3 V1.25 H6.6 M16.6 1.25 H21.35 V6.3 M21.35 16.1 V20.65 H16.6 M6.6 20.65 H1.85 V16.1" fill="none" stroke="#cfcfcf" stroke-width="1.7"/>
<circle cx="11.8" cy="10.8" r="7.7" fill="none" stroke="#cfcfcf" stroke-width="1.6"/>
<path d="M4.3 9.8 A7.7 7.7 0 0 1 19.3 8.8 Q14.5 9.8 12 6.3 Q9 9.3 4.3 9.8 Z" fill="#cfcfcf"/>
<rect x="8.5" y="11.2" width="1.6" height="1.6" fill="#cfcfcf"/><rect x="13.8" y="11.2" width="1.6" height="1.6" fill="#cfcfcf"/>
</svg>
<div class="rl" style="top:675px"></div>
<div class="td" id="n7" style="left:352px;top:697px;letter-spacing:0;transform:scaleX(0.910);transform-origin:0 0">23</div>
<div class="td" id="m7" style="left:411px;top:697px;letter-spacing:-0.009px">Основной (2)</div>
<div class="td" id="d7" style="left:578px;top:697px;letter-spacing:0.300px">Основной</div>
<div class="td" id="k7" style="left:1077px;top:686px;letter-spacing:-0.05px">2<br>Кабельная</div>
<svg class="a" style="left:1188px;top:697.5px" width="18" height="18" viewBox="0 0 18 18"><path d="M1.5 9.5 L6 14 L16.5 3.5" fill="none" stroke="#555" stroke-width="1.7"/></svg>
<svg class="a" style="left:1345px;top:697.5px" width="18" height="18" viewBox="0 0 18 18"><path d="M1.5 9.5 L6 14 L16.5 3.5" fill="none" stroke="#555" stroke-width="1.7"/></svg>
<svg class="a" style="left:1493px;top:698.5px" width="19" height="19" viewBox="0 0 19 19"><path d="M5.6 6.9 L14.1 1.6 Q15.6 0.9 16.5 2.6 L17.2 5.1 Q17.5 6.3 16.5 7.3 L15.3 8.2 Q15.9 9.5 15.2 10.5 L12.8 12.3 Q10.5 13.4 8.4 11.7 L6.3 10.2 Q5.1 8.8 5.6 6.9 Z" fill="#cfcfcf"/><rect x="12" y="10.5" width="1.6" height="4.8" fill="#cfcfcf"/><rect x="12" y="13.7" width="6" height="1.6" fill="#cfcfcf"/><path d="M1.1 9.5 L4 8.2 L5.6 12 L3.3 13.6 Z" fill="#cfcfcf"/><line x1="0.2" y1="0.1" x2="17.9" y2="17.7" stroke="#fff" stroke-width="3"/><line x1="0.2" y1="0.1" x2="17.9" y2="17.7" stroke="#cfcfcf" stroke-width="1.5"/></svg>
<svg class="a" style="left:1570px;top:695.5px" width="24" height="24" viewBox="0 0 24 24">
<path d="M1.85 6.3 V1.25 H6.6 M16.6 1.25 H21.35 V6.3 M21.35 16.1 V20.65 H16.6 M6.6 20.65 H1.85 V16.1" fill="none" stroke="#cfcfcf" stroke-width="1.7"/>
<circle cx="11.8" cy="10.8" r="7.7" fill="none" stroke="#cfcfcf" stroke-width="1.6"/>
<path d="M4.3 9.8 A7.7 7.7 0 0 1 19.3 8.8 Q14.5 9.8 12 6.3 Q9 9.3 4.3 9.8 Z" fill="#cfcfcf"/>
<rect x="8.5" y="11.2" width="1.6" height="1.6" fill="#cfcfcf"/><rect x="13.8" y="11.2" width="1.6" height="1.6" fill="#cfcfcf"/>
</svg>
<div class="rl" style="top:738px"></div>
<div class="td" id="n8" style="left:352px;top:760px;letter-spacing:0;transform:scaleX(0.910);transform-origin:0 0">25</div>
<div class="td" id="m8" style="left:411px;top:760px;letter-spacing:-0.700px">test21</div>
<div class="td" id="d8" style="left:578px;top:760px;letter-spacing:-0.700px">test21</div>
<div class="td" id="k8" style="left:1077px;top:749px;letter-spacing:-0.05px">2<br>Кабельная</div>
<svg class="a" style="left:1188px;top:760.5px" width="18" height="18" viewBox="0 0 18 18"><path d="M3.5 3.5 L14.5 14.5 M14.5 3.5 L3.5 14.5" fill="none" stroke="#c6c6c6" stroke-width="1.6"/></svg>
<svg class="a" style="left:1345px;top:760.5px" width="18" height="18" viewBox="0 0 18 18"><path d="M3.5 3.5 L14.5 14.5 M14.5 3.5 L3.5 14.5" fill="none" stroke="#c6c6c6" stroke-width="1.6"/></svg>
<svg class="a" style="left:1493px;top:761.5px" width="19" height="19" viewBox="0 0 19 19"><path d="M5.6 6.9 L14.1 1.6 Q15.6 0.9 16.5 2.6 L17.2 5.1 Q17.5 6.3 16.5 7.3 L15.3 8.2 Q15.9 9.5 15.2 10.5 L12.8 12.3 Q10.5 13.4 8.4 11.7 L6.3 10.2 Q5.1 8.8 5.6 6.9 Z" fill="#666"/><rect x="12" y="10.5" width="1.6" height="4.8" fill="#666"/><rect x="12" y="13.7" width="6" height="1.6" fill="#666"/><path d="M1.1 9.5 L4 8.2 L5.6 12 L3.3 13.6 Z" fill="#666"/></svg>
<svg class="a" style="left:1570px;top:758.5px" width="24" height="24" viewBox="0 0 24 24">
<path d="M1.85 6.3 V1.25 H6.6 M16.6 1.25 H21.35 V6.3 M21.35 16.1 V20.65 H16.6 M6.6 20.65 H1.85 V16.1" fill="none" stroke="#cfcfcf" stroke-width="1.7"/>
<circle cx="11.8" cy="10.8" r="7.7" fill="none" stroke="#cfcfcf" stroke-width="1.6"/>
<path d="M4.3 9.8 A7.7 7.7 0 0 1 19.3 8.8 Q14.5 9.8 12 6.3 Q9 9.3 4.3 9.8 Z" fill="#cfcfcf"/>
<rect x="8.5" y="11.2" width="1.6" height="1.6" fill="#cfcfcf"/><rect x="13.8" y="11.2" width="1.6" height="1.6" fill="#cfcfcf"/>
</svg>
<div class="rl" style="top:801px"></div>
<div class="td" id="n9" style="left:352px;top:823px;letter-spacing:0;transform:scaleX(1.000);transform-origin:0 0">30</div>
<div class="td" id="m9" style="left:411px;top:823px;letter-spacing:-0.450px">КПП X (2)</div>
<div class="td" id="k9" style="left:1077px;top:812px;letter-spacing:-0.05px">2<br>Кабельная</div>
<svg class="a" style="left:1188px;top:823.5px" width="18" height="18" viewBox="0 0 18 18"><path d="M1.5 9.5 L6 14 L16.5 3.5" fill="none" stroke="#555" stroke-width="1.7"/></svg>
<svg class="a" style="left:1345px;top:823.5px" width="18" height="18" viewBox="0 0 18 18"><path d="M1.5 9.5 L6 14 L16.5 3.5" fill="none" stroke="#555" stroke-width="1.7"/></svg>
<svg class="a" style="left:1493px;top:824.5px" width="19" height="19" viewBox="0 0 19 19"><path d="M5.6 6.9 L14.1 1.6 Q15.6 0.9 16.5 2.6 L17.2 5.1 Q17.5 6.3 16.5 7.3 L15.3 8.2 Q15.9 9.5 15.2 10.5 L12.8 12.3 Q10.5 13.4 8.4 11.7 L6.3 10.2 Q5.1 8.8 5.6 6.9 Z" fill="#666"/><rect x="12" y="10.5" width="1.6" height="4.8" fill="#666"/><rect x="12" y="13.7" width="6" height="1.6" fill="#666"/><path d="M1.1 9.5 L4 8.2 L5.6 12 L3.3 13.6 Z" fill="#666"/></svg>
<svg class="a" style="left:1570px;top:821.5px" width="24" height="24" viewBox="0 0 24 24">
<path d="M1.85 6.3 V1.25 H6.6 M16.6 1.25 H21.35 V6.3 M21.35 16.1 V20.65 H16.6 M6.6 20.65 H1.85 V16.1" fill="none" stroke="#cfcfcf" stroke-width="1.7"/>
<circle cx="11.8" cy="10.8" r="7.7" fill="none" stroke="#cfcfcf" stroke-width="1.6"/>
<path d="M4.3 9.8 A7.7 7.7 0 0 1 19.3 8.8 Q14.5 9.8 12 6.3 Q9 9.3 4.3 9.8 Z" fill="#cfcfcf"/>
<rect x="8.5" y="11.2" width="1.6" height="1.6" fill="#cfcfcf"/><rect x="13.8" y="11.2" width="1.6" height="1.6" fill="#cfcfcf"/>
</svg>
<div class="rl" style="top:864px"></div>
<div class="td" id="n10" style="left:352px;top:886px;letter-spacing:0;transform:scaleX(0.910);transform-origin:0 0">32</div>
<div class="td" id="m10" style="left:411px;top:886px;letter-spacing:-0.367px">офис</div>
<div class="td" id="d10" style="left:578px;top:886px;letter-spacing:-0.113px">офис моситлаб в к9, терминалы на парадном входе</div>
<div class="td" id="k10" style="left:1077px;top:875px;letter-spacing:-0.05px">2<br>Кабельная</div>
<svg class="a" style="left:1188px;top:886.5px" width="18" height="18" viewBox="0 0 18 18"><path d="M1.5 9.5 L6 14 L16.5 3.5" fill="none" stroke="#555" stroke-width="1.7"/></svg>
<svg class="a" style="left:1345px;top:886.5px" width="18" height="18" viewBox="0 0 18 18"><path d="M1.5 9.5 L6 14 L16.5 3.5" fill="none" stroke="#555" stroke-width="1.7"/></svg>
<svg class="a" style="left:1493px;top:887.5px" width="19" height="19" viewBox="0 0 19 19"><path d="M5.6 6.9 L14.1 1.6 Q15.6 0.9 16.5 2.6 L17.2 5.1 Q17.5 6.3 16.5 7.3 L15.3 8.2 Q15.9 9.5 15.2 10.5 L12.8 12.3 Q10.5 13.4 8.4 11.7 L6.3 10.2 Q5.1 8.8 5.6 6.9 Z" fill="#cfcfcf"/><rect x="12" y="10.5" width="1.6" height="4.8" fill="#cfcfcf"/><rect x="12" y="13.7" width="6" height="1.6" fill="#cfcfcf"/><path d="M1.1 9.5 L4 8.2 L5.6 12 L3.3 13.6 Z" fill="#cfcfcf"/><line x1="0.2" y1="0.1" x2="17.9" y2="17.7" stroke="#fff" stroke-width="3"/><line x1="0.2" y1="0.1" x2="17.9" y2="17.7" stroke="#cfcfcf" stroke-width="1.5"/></svg>
<svg class="a" style="left:1570px;top:884.5px" width="24" height="24" viewBox="0 0 24 24">
<path d="M1.85 6.3 V1.25 H6.6 M16.6 1.25 H21.35 V6.3 M21.35 16.1 V20.65 H16.6 M6.6 20.65 H1.85 V16.1" fill="none" stroke="#cfcfcf" stroke-width="1.7"/>
<circle cx="11.8" cy="10.8" r="7.7" fill="none" stroke="#cfcfcf" stroke-width="1.6"/>
<path d="M4.3 9.8 A7.7 7.7 0 0 1 19.3 8.8 Q14.5 9.8 12 6.3 Q9 9.3 4.3 9.8 Z" fill="#cfcfcf"/>
<rect x="8.5" y="11.2" width="1.6" height="1.6" fill="#cfcfcf"/><rect x="13.8" y="11.2" width="1.6" height="1.6" fill="#cfcfcf"/>
</svg>
<div class="rl" style="top:927px"></div>
<div class="a" style="left:1705px;top:178px;width:10px;height:760px;background:linear-gradient(to right, rgba(0,0,0,0), rgba(0,0,0,0.055))"></div>
<div class="a" style="left:1715px;top:178px;width:136px;height:760px;background:#fff;border-left:1px solid #e4e4e4;border-right:1px solid #e4e4e4"></div>
<div class="th" style="left:1728px;top:197.5px;letter-spacing:0.600px">Управление</div>
<div class="a" style="left:1715px;top:234px;width:136px;height:1px;background:#e4e4e4"></div>
<div class="a" style="left:1715px;top:297px;width:136px;height:1px;background:#e4e4e4"></div>
<div class="btn" style="left:1731px;top:250px;background:#f4f9fa"></div>
<div class="btn" style="left:1767px;top:250px;background:#fcf8f3"></div>
<div class="btn" style="left:1803px;top:250px;background:#fdf6f6"></div>
<svg class="a" style="left:1731px;top:250px" width="32" height="32" viewBox="0 0 32 32">
<path d="M10 16 C12.6 10.6, 20.6 10.6, 23.2 16 C20.6 21.4, 12.6 21.4, 10 16 Z" fill="none" stroke="#2ab4c2" stroke-width="1.35"/>
<circle cx="16.6" cy="16" r="2" fill="#2ab4c2"/></svg>
<svg class="a" style="left:1767px;top:250px" width="32" height="32" viewBox="0 0 32 32">
<g transform="translate(16.1,15.8) rotate(-45)"><path d="M-8 0 L-7 -1.25 H4.2 V1.25 H-7 Z" fill="none" stroke="#f7941d" stroke-width="1.2" stroke-linejoin="round"/>
<rect x="5.3" y="-1.85" width="3.2" height="3.7" fill="#f7941d"/></g></svg>
<svg class="a" style="left:1803px;top:250px" width="32" height="32" viewBox="0 0 32 32">
<path d="M9.9 12.1 H22.9 M11.85 12.1 V22.05 H21.15 V12.1 M13.75 12.1 V9.95 H18.75 V12.1" fill="none" stroke="#e8383d" stroke-width="1.35"/>
<line x1="14.9" y1="15.3" x2="14.9" y2="19" stroke="#e8383d" stroke-width="1.1"/><line x1="18" y1="15.3" x2="18" y2="19" stroke="#e8383d" stroke-width="1.1"/></svg>
<div class="a" style="left:1715px;top:360px;width:136px;height:1px;background:#e4e4e4"></div>
<div class="btn" style="left:1731px;top:313px;background:#f4f9fa"></div>
<div class="btn" style="left:1767px;top:313px;background:#fcf8f3"></div>
<div class="btn" style="left:1803px;top:313px;background:#fdf6f6"></div>
<svg class="a" style="left:1731px;top:313px" width="32" height="32" viewBox="0 0 32 32">
<path d="M10 16 C12.6 10.6, 20.6 10.6, 23.2 16 C20.6 21.4, 12.6 21.4, 10 16 Z" fill="none" stroke="#2ab4c2" stroke-width="1.35"/>
<circle cx="16.6" cy="16" r="2" fill="#2ab4c2"/></svg>
<svg class="a" style="left:1767px;top:313px" width="32" height="32" viewBox="0 0 32 32">
<g transform="translate(16.1,15.8) rotate(-45)"><path d="M-8 0 L-7 -1.25 H4.2 V1.25 H-7 Z" fill="none" stroke="#f7941d" stroke-width="1.2" stroke-linejoin="round"/>
<rect x="5.3" y="-1.85" width="3.2" height="3.7" fill="#f7941d"/></g></svg>
<svg class="a" style="left:1803px;top:313px" width="32" height="32" viewBox="0 0 32 32">
<path d="M9.9 12.1 H22.9 M11.85 12.1 V22.05 H21.15 V12.1 M13.75 12.1 V9.95 H18.75 V12.1" fill="none" stroke="#e8383d" stroke-width="1.35"/>
<line x1="14.9" y1="15.3" x2="14.9" y2="19" stroke="#e8383d" stroke-width="1.1"/><line x1="18" y1="15.3" x2="18" y2="19" stroke="#e8383d" stroke-width="1.1"/></svg>
<div class="a" style="left:1715px;top:423px;width:136px;height:1px;background:#e4e4e4"></div>
<div class="btn" style="left:1731px;top:376px;background:#f4f9fa"></div>
<div class="btn" style="left:1767px;top:376px;background:#fcf8f3"></div>
<div class="btn" style="left:1803px;top:376px;background:#fdf6f6"></div>
<svg class="a" style="left:1731px;top:376px" width="32" height="32" viewBox="0 0 32 32">
<path d="M10 16 C12.6 10.6, 20.6 10.6, 23.2 16 C20.6 21.4, 12.6 21.4, 10 16 Z" fill="none" stroke="#2ab4c2" stroke-width="1.35"/>
<circle cx="16.6" cy="16" r="2" fill="#2ab4c2"/></svg>
<svg class="a" style="left:1767px;top:376px" width="32" height="32" viewBox="0 0 32 32">
<g transform="translate(16.1,15.8) rotate(-45)"><path d="M-8 0 L-7 -1.25 H4.2 V1.25 H-7 Z" fill="none" stroke="#f7941d" stroke-width="1.2" stroke-linejoin="round"/>
<rect x="5.3" y="-1.85" width="3.2" height="3.7" fill="#f7941d"/></g></svg>
<svg class="a" style="left:1803px;top:376px" width="32" height="32" viewBox="0 0 32 32">
<path d="M9.9 12.1 H22.9 M11.85 12.1 V22.05 H21.15 V12.1 M13.75 12.1 V9.95 H18.75 V12.1" fill="none" stroke="#e8383d" stroke-width="1.35"/>
<line x1="14.9" y1="15.3" x2="14.9" y2="19" stroke="#e8383d" stroke-width="1.1"/><line x1="18" y1="15.3" x2="18" y2="19" stroke="#e8383d" stroke-width="1.1"/></svg>
<div class="a" style="left:1715px;top:486px;width:136px;height:1px;background:#e4e4e4"></div>
<div class="btn" style="left:1731px;top:439px;background:#f4f9fa"></div>
<div class="btn" style="left:1767px;top:439px;background:#fcf8f3"></div>
<div class="btn" style="left:1803px;top:439px;background:#fdf6f6"></div>
<svg class="a" style="left:1731px;top:439px" width="32" height="32" viewBox="0 0 32 32">
<path d="M10 16 C12.6 10.6, 20.6 10.6, 23.2 16 C20.6 21.4, 12.6 21.4, 10 16 Z" fill="none" stroke="#2ab4c2" stroke-width="1.35"/>
<circle cx="16.6" cy="16" r="2" fill="#2ab4c2"/></svg>
<svg class="a" style="left:1767px;top:439px" width="32" height="32" viewBox="0 0 32 32">
<g transform="translate(16.1,15.8) rotate(-45)"><path d="M-8 0 L-7 -1.25 H4.2 V1.25 H-7 Z" fill="none" stroke="#f7941d" stroke-width="1.2" stroke-linejoin="round"/>
<rect x="5.3" y="-1.85" width="3.2" height="3.7" fill="#f7941d"/></g></svg>
<svg class="a" style="left:1803px;top:439px" width="32" height="32" viewBox="0 0 32 32">
<path d="M9.9 12.1 H22.9 M11.85 12.1 V22.05 H21.15 V12.1 M13.75 12.1 V9.95 H18.75 V12.1" fill="none" stroke="#e8383d" stroke-width="1.35"/>
<line x1="14.9" y1="15.3" x2="14.9" y2="19" stroke="#e8383d" stroke-width="1.1"/><line x1="18" y1="15.3" x2="18" y2="19" stroke="#e8383d" stroke-width="1.1"/></svg>
<div class="a" style="left:1715px;top:549px;width:136px;height:1px;background:#e4e4e4"></div>
<div class="btn" style="left:1731px;top:502px;background:#f4f9fa"></div>
<div class="btn" style="left:1767px;top:502px;background:#fcf8f3"></div>
<div class="btn" style="left:1803px;top:502px;background:#fdf6f6"></div>
<svg class="a" style="left:1731px;top:502px" width="32" height="32" viewBox="0 0 32 32">
<path d="M10 16 C12.6 10.6, 20.6 10.6, 23.2 16 C20.6 21.4, 12.6 21.4, 10 16 Z" fill="none" stroke="#2ab4c2" stroke-width="1.35"/>
<circle cx="16.6" cy="16" r="2" fill="#2ab4c2"/></svg>
<svg class="a" style="left:1767px;top:502px" width="32" height="32" viewBox="0 0 32 32">
<g transform="translate(16.1,15.8) rotate(-45)"><path d="M-8 0 L-7 -1.25 H4.2 V1.25 H-7 Z" fill="none" stroke="#f7941d" stroke-width="1.2" stroke-linejoin="round"/>
<rect x="5.3" y="-1.85" width="3.2" height="3.7" fill="#f7941d"/></g></svg>
<svg class="a" style="left:1803px;top:502px" width="32" height="32" viewBox="0 0 32 32">
<path d="M9.9 12.1 H22.9 M11.85 12.1 V22.05 H21.15 V12.1 M13.75 12.1 V9.95 H18.75 V12.1" fill="none" stroke="#e8383d" stroke-width="1.35"/>
<line x1="14.9" y1="15.3" x2="14.9" y2="19" stroke="#e8383d" stroke-width="1.1"/><line x1="18" y1="15.3" x2="18" y2="19" stroke="#e8383d" stroke-width="1.1"/></svg>
<div class="a" style="left:1715px;top:612px;width:136px;height:1px;background:#e4e4e4"></div>
<div class="btn" style="left:1731px;top:565px;background:#f4f9fa"></div>
<div class="btn" style="left:1767px;top:565px;background:#fcf8f3"></div>
<div class="btn" style="left:1803px;top:565px;background:#fdf6f6"></div>
<svg class="a" style="left:1731px;top:565px" width="32" height="32" viewBox="0 0 32 32">
<path d="M10 16 C12.6 10.6, 20.6 10.6, 23.2 16 C20.6 21.4, 12.6 21.4, 10 16 Z" fill="none" stroke="#2ab4c2" stroke-width="1.35"/>
<circle cx="16.6" cy="16" r="2" fill="#2ab4c2"/></svg>
<svg class="a" style="left:1767px;top:565px" width="32" height="32" viewBox="0 0 32 32">
<g transform="translate(16.1,15.8) rotate(-45)"><path d="M-8 0 L-7 -1.25 H4.2 V1.25 H-7 Z" fill="none" stroke="#f7941d" stroke-width="1.2" stroke-linejoin="round"/>
<rect x="5.3" y="-1.85" width="3.2" height="3.7" fill="#f7941d"/></g></svg>
<svg class="a" style="left:1803px;top:565px" width="32" height="32" viewBox="0 0 32 32">
<path d="M9.9 12.1 H22.9 M11.85 12.1 V22.05 H21.15 V12.1 M13.75 12.1 V9.95 H18.75 V12.1" fill="none" stroke="#e8383d" stroke-width="1.35"/>
<line x1="14.9" y1="15.3" x2="14.9" y2="19" stroke="#e8383d" stroke-width="1.1"/><line x1="18" y1="15.3" x2="18" y2="19" stroke="#e8383d" stroke-width="1.1"/></svg>
<div class="a" style="left:1715px;top:675px;width:136px;height:1px;background:#e4e4e4"></div>
<div class="btn" style="left:1731px;top:628px;background:#f4f9fa"></div>
<div class="btn" style="left:1767px;top:628px;background:#fcf8f3"></div>
<div class="btn" style="left:1803px;top:628px;background:#fdf6f6"></div>
<svg class="a" style="left:1731px;top:628px" width="32" height="32" viewBox="0 0 32 32">
<path d="M10 16 C12.6 10.6, 20.6 10.6, 23.2 16 C20.6 21.4, 12.6 21.4, 10 16 Z" fill="none" stroke="#2ab4c2" stroke-width="1.35"/>
<circle cx="16.6" cy="16" r="2" fill="#2ab4c2"/></svg>
<svg class="a" style="left:1767px;top:628px" width="32" height="32" viewBox="0 0 32 32">
<g transform="translate(16.1,15.8) rotate(-45)"><path d="M-8 0 L-7 -1.25 H4.2 V1.25 H-7 Z" fill="none" stroke="#f7941d" stroke-width="1.2" stroke-linejoin="round"/>
<rect x="5.3" y="-1.85" width="3.2" height="3.7" fill="#f7941d"/></g></svg>
<svg class="a" style="left:1803px;top:628px" width="32" height="32" viewBox="0 0 32 32">
<path d="M9.9 12.1 H22.9 M11.85 12.1 V22.05 H21.15 V12.1 M13.75 12.1 V9.95 H18.75 V12.1" fill="none" stroke="#e8383d" stroke-width="1.35"/>
<line x1="14.9" y1="15.3" x2="14.9" y2="19" stroke="#e8383d" stroke-width="1.1"/><line x1="18" y1="15.3" x2="18" y2="19" stroke="#e8383d" stroke-width="1.1"/></svg>
<div class="a" style="left:1715px;top:738px;width:136px;height:1px;background:#e4e4e4"></div>
<div class="btn" style="left:1731px;top:691px;background:#f4f9fa"></div>
<div class="btn" style="left:1767px;top:691px;background:#fcf8f3"></div>
<div class="btn" style="left:1803px;top:691px;background:#fdf6f6"></div>
<svg class="a" style="left:1731px;top:691px" width="32" height="32" viewBox="0 0 32 32">
<path d="M10 16 C12.6 10.6, 20.6 10.6, 23.2 16 C20.6 21.4, 12.6 21.4, 10 16 Z" fill="none" stroke="#2ab4c2" stroke-width="1.35"/>
<circle cx="16.6" cy="16" r="2" fill="#2ab4c2"/></svg>
<svg class="a" style="left:1767px;top:691px" width="32" height="32" viewBox="0 0 32 32">
<g transform="translate(16.1,15.8) rotate(-45)"><path d="M-8 0 L-7 -1.25 H4.2 V1.25 H-7 Z" fill="none" stroke="#f7941d" stroke-width="1.2" stroke-linejoin="round"/>
<rect x="5.3" y="-1.85" width="3.2" height="3.7" fill="#f7941d"/></g></svg>
<svg class="a" style="left:1803px;top:691px" width="32" height="32" viewBox="0 0 32 32">
<path d="M9.9 12.1 H22.9 M11.85 12.1 V22.05 H21.15 V12.1 M13.75 12.1 V9.95 H18.75 V12.1" fill="none" stroke="#e8383d" stroke-width="1.35"/>
<line x1="14.9" y1="15.3" x2="14.9" y2="19" stroke="#e8383d" stroke-width="1.1"/><line x1="18" y1="15.3" x2="18" y2="19" stroke="#e8383d" stroke-width="1.1"/></svg>
<div class="a" style="left:1715px;top:801px;width:136px;height:1px;background:#e4e4e4"></div>
<div class="btn" style="left:1731px;top:754px;background:#f4f9fa"></div>
<div class="btn" style="left:1767px;top:754px;background:#fcf8f3"></div>
<div class="btn" style="left:1803px;top:754px;background:#fdf6f6"></div>
<svg class="a" style="left:1731px;top:754px" width="32" height="32" viewBox="0 0 32 32">
<path d="M10 16 C12.6 10.6, 20.6 10.6, 23.2 16 C20.6 21.4, 12.6 21.4, 10 16 Z" fill="none" stroke="#2ab4c2" stroke-width="1.35"/>
<circle cx="16.6" cy="16" r="2" fill="#2ab4c2"/></svg>
<svg class="a" style="left:1767px;top:754px" width="32" height="32" viewBox="0 0 32 32">
<g transform="translate(16.1,15.8) rotate(-45)"><path d="M-8 0 L-7 -1.25 H4.2 V1.25 H-7 Z" fill="none" stroke="#f7941d" stroke-width="1.2" stroke-linejoin="round"/>
<rect x="5.3" y="-1.85" width="3.2" height="3.7" fill="#f7941d"/></g></svg>
<svg class="a" style="left:1803px;top:754px" width="32" height="32" viewBox="0 0 32 32">
<path d="M9.9 12.1 H22.9 M11.85 12.1 V22.05 H21.15 V12.1 M13.75 12.1 V9.95 H18.75 V12.1" fill="none" stroke="#e8383d" stroke-width="1.35"/>
<line x1="14.9" y1="15.3" x2="14.9" y2="19" stroke="#e8383d" stroke-width="1.1"/><line x1="18" y1="15.3" x2="18" y2="19" stroke="#e8383d" stroke-width="1.1"/></svg>
<div class="a" style="left:1715px;top:864px;width:136px;height:1px;background:#e4e4e4"></div>
<div class="btn" style="left:1731px;top:817px;background:#f4f9fa"></div>
<div class="btn" style="left:1767px;top:817px;background:#fcf8f3"></div>
<div class="btn" style="left:1803px;top:817px;background:#fdf6f6"></div>
<svg class="a" style="left:1731px;top:817px" width="32" height="32" viewBox="0 0 32 32">
<path d="M10 16 C12.6 10.6, 20.6 10.6, 23.2 16 C20.6 21.4, 12.6 21.4, 10 16 Z" fill="none" stroke="#2ab4c2" stroke-width="1.35"/>
<circle cx="16.6" cy="16" r="2" fill="#2ab4c2"/></svg>
<svg class="a" style="left:1767px;top:817px" width="32" height="32" viewBox="0 0 32 32">
<g transform="translate(16.1,15.8) rotate(-45)"><path d="M-8 0 L-7 -1.25 H4.2 V1.25 H-7 Z" fill="none" stroke="#f7941d" stroke-width="1.2" stroke-linejoin="round"/>
<rect x="5.3" y="-1.85" width="3.2" height="3.7" fill="#f7941d"/></g></svg>
<svg class="a" style="left:1803px;top:817px" width="32" height="32" viewBox="0 0 32 32">
<path d="M9.9 12.1 H22.9 M11.85 12.1 V22.05 H21.15 V12.1 M13.75 12.1 V9.95 H18.75 V12.1" fill="none" stroke="#e8383d" stroke-width="1.35"/>
<line x1="14.9" y1="15.3" x2="14.9" y2="19" stroke="#e8383d" stroke-width="1.1"/><line x1="18" y1="15.3" x2="18" y2="19" stroke="#e8383d" stroke-width="1.1"/></svg>
<div class="a" style="left:1715px;top:927px;width:136px;height:1px;background:#e4e4e4"></div>
<div class="btn" style="left:1731px;top:880px;background:#f4f9fa"></div>
<div class="btn" style="left:1767px;top:880px;background:#fcf8f3"></div>
<div class="btn" style="left:1803px;top:880px;background:#fdf6f6"></div>
<svg class="a" style="left:1731px;top:880px" width="32" height="32" viewBox="0 0 32 32">
<path d="M10 16 C12.6 10.6, 20.6 10.6, 23.2 16 C20.6 21.4, 12.6 21.4, 10 16 Z" fill="none" stroke="#2ab4c2" stroke-width="1.35"/>
<circle cx="16.6" cy="16" r="2" fill="#2ab4c2"/></svg>
<svg class="a" style="left:1767px;top:880px" width="32" height="32" viewBox="0 0 32 32">
<g transform="translate(16.1,15.8) rotate(-45)"><path d="M-8 0 L-7 -1.25 H4.2 V1.25 H-7 Z" fill="none" stroke="#f7941d" stroke-width="1.2" stroke-linejoin="round"/>
<rect x="5.3" y="-1.85" width="3.2" height="3.7" fill="#f7941d"/></g></svg>
<svg class="a" style="left:1803px;top:880px" width="32" height="32" viewBox="0 0 32 32">
<path d="M9.9 12.1 H22.9 M11.85 12.1 V22.05 H21.15 V12.1 M13.75 12.1 V9.95 H18.75 V12.1" fill="none" stroke="#e8383d" stroke-width="1.35"/>
<line x1="14.9" y1="15.3" x2="14.9" y2="19" stroke="#e8383d" stroke-width="1.1"/><line x1="18" y1="15.3" x2="18" y2="19" stroke="#e8383d" stroke-width="1.1"/></svg>
<svg class="a" style="left:0;top:0;pointer-events:none" width="1903" height="927" viewBox="0 0 1903 927">
<line x1="1639.5" y1="169.8" x2="1768" y2="251" stroke="#ff0000" stroke-width="3.2" stroke-linecap="butt"/>
<path d="M1778 257.5 L1768.5 245.5 L1764 253.5 Z" fill="#ff0000"/>
</svg></body></html>
